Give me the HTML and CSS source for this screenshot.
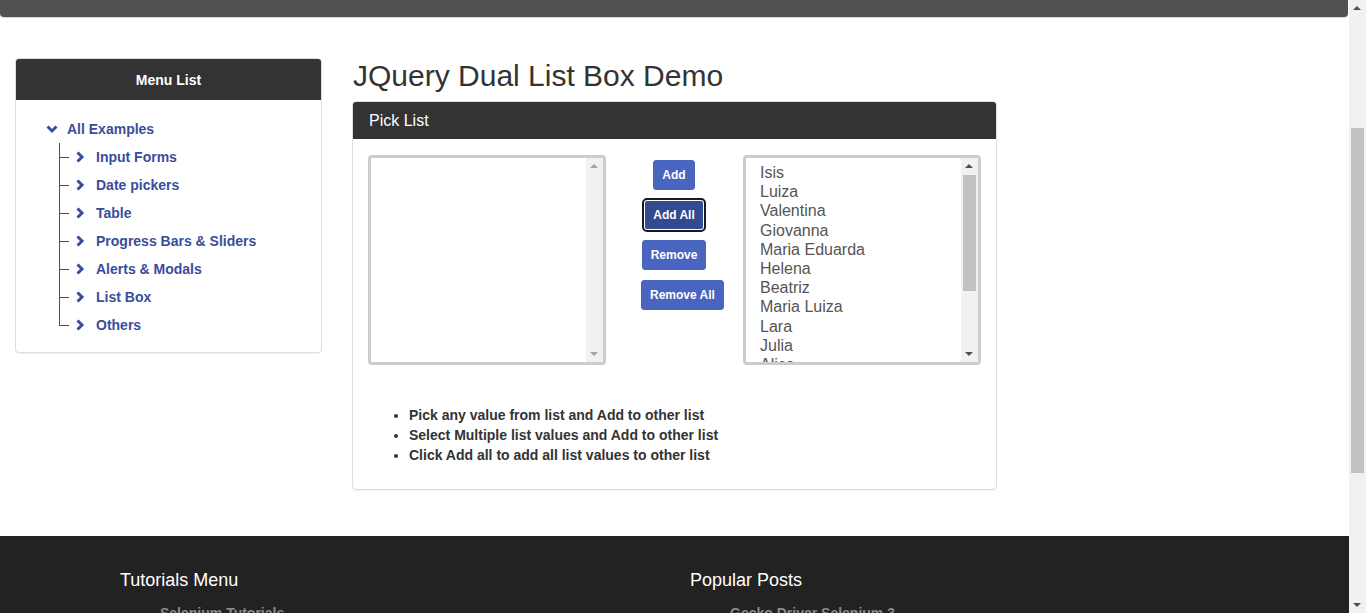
FILE: index.html
```html
<!DOCTYPE html>
<html lang="en">
<head>
<meta charset="utf-8">
<title>JQuery Dual List Box Demo</title>
<link rel="stylesheet" href="styles.css">
</head>
<body>
<div class="site">
  <div class="topbar"></div>
  <div class="content">
    <aside class="side-panel">
      <div class="side-head">Menu List</div>
      <div class="side-body">
        <ul class="tree">
          <li class="tree-root">
            <a class="tree-link root-link"><svg class="chev-down" viewBox="0 0 12 9" width="12" height="9"><path d="M1.5 1.5 L6 6 L10.5 1.5" fill="none" stroke="currentColor" stroke-width="3"/></svg><span>All Examples</span></a>
            <ul class="tree-children">
              <li><a class="tree-link"><svg class="chev-right" viewBox="0 0 9 12" width="9" height="12"><path d="M1.5 1.5 L6 6 L1.5 10.5" fill="none" stroke="currentColor" stroke-width="3"/></svg><span>Input Forms</span></a></li>
              <li><a class="tree-link"><svg class="chev-right" viewBox="0 0 9 12" width="9" height="12"><path d="M1.5 1.5 L6 6 L1.5 10.5" fill="none" stroke="currentColor" stroke-width="3"/></svg><span>Date pickers</span></a></li>
              <li><a class="tree-link"><svg class="chev-right" viewBox="0 0 9 12" width="9" height="12"><path d="M1.5 1.5 L6 6 L1.5 10.5" fill="none" stroke="currentColor" stroke-width="3"/></svg><span>Table</span></a></li>
              <li><a class="tree-link"><svg class="chev-right" viewBox="0 0 9 12" width="9" height="12"><path d="M1.5 1.5 L6 6 L1.5 10.5" fill="none" stroke="currentColor" stroke-width="3"/></svg><span>Progress Bars &amp; Sliders</span></a></li>
              <li><a class="tree-link"><svg class="chev-right" viewBox="0 0 9 12" width="9" height="12"><path d="M1.5 1.5 L6 6 L1.5 10.5" fill="none" stroke="currentColor" stroke-width="3"/></svg><span>Alerts &amp; Modals</span></a></li>
              <li><a class="tree-link"><svg class="chev-right" viewBox="0 0 9 12" width="9" height="12"><path d="M1.5 1.5 L6 6 L1.5 10.5" fill="none" stroke="currentColor" stroke-width="3"/></svg><span>List Box</span></a></li>
              <li><a class="tree-link"><svg class="chev-right" viewBox="0 0 9 12" width="9" height="12"><path d="M1.5 1.5 L6 6 L1.5 10.5" fill="none" stroke="currentColor" stroke-width="3"/></svg><span>Others</span></a></li>
            </ul>
          </li>
        </ul>
      </div>
    </aside>

    <main class="main">
      <h1 class="page-title">JQuery Dual List Box Demo</h1>
      <section class="panel">
        <div class="panel-head">Pick List</div>
        <div class="panel-body">
          <div class="dual">
            <div class="listbox">
              <div class="items"></div>
              <div class="vscroll">
                <span class="arrow-up light"></span>
                <span class="track"></span>
                <span class="arrow-down light"></span>
              </div>
            </div>
            <div class="actions">
              <button class="btn">Add</button>
              <button class="btn focused">Add All</button>
              <button class="btn">Remove</button>
              <button class="btn">Remove All</button>
            </div>
            <div class="listbox">
              <div class="items">
                <div class="item">Isis</div>
                <div class="item">Luiza</div>
                <div class="item">Valentina</div>
                <div class="item">Giovanna</div>
                <div class="item">Maria Eduarda</div>
                <div class="item">Helena</div>
                <div class="item">Beatriz</div>
                <div class="item">Maria Luiza</div>
                <div class="item">Lara</div>
                <div class="item">Julia</div>
                <div class="item">Alice</div>
                <div class="item">Manuela</div>
              </div>
              <div class="vscroll">
                <span class="arrow-up"></span>
                <span class="track"><span class="thumb"></span></span>
                <span class="arrow-down"></span>
              </div>
            </div>
          </div>
          <ul class="notes">
            <li>Pick any value from list and Add to other list</li>
            <li>Select Multiple list values and Add to other list</li>
            <li>Click Add all to add all list values to other list</li>
          </ul>
        </div>
      </section>
    </main>
  </div>

  <footer class="footer">
    <div class="footer-col">
      <h3 class="footer-title">Tutorials Menu</h3>
      <ul class="footer-list"><li>Selenium Tutorials</li></ul>
    </div>
    <div class="footer-col">
      <h3 class="footer-title">Popular Posts</h3>
      <ul class="footer-list"><li>Gecko Driver Selenium 3</li></ul>
    </div>
  </footer>
</div>

<div class="page-scrollbar">
  <span class="pg-arrow-up"></span>
  <span class="pg-track"><span class="pg-thumb"></span></span>
  <span class="pg-arrow-down"></span>
</div>
</body>
</html>
```

FILE: styles.css
```css
* { box-sizing: border-box; }

html, body {
  margin: 0;
  padding: 0;
  height: 613px;
  overflow: hidden;
  background: #fff;
}

body {
  font-family: "Liberation Sans", Arial, sans-serif;
  font-size: 14px;
  color: #333;
}

.site {
  width: 1349px;
}

.topbar {
  height: 17px;
  width: 1348px;
  background: #515151;
  border-radius: 0 0 4px 4px;
  box-shadow: 0 1px 1px rgba(0, 0, 0, 0.18);
}

.content {
  display: flex;
  align-items: flex-start;
  padding-top: 41px;
  padding-left: 15px;
}

/* Sidebar */
.side-panel {
  width: 307px;
  border: 1px solid #ddd;
  border-radius: 4px;
  background: #fff;
  box-shadow: 0 1px 1px rgba(0, 0, 0, 0.05);
  overflow: hidden;
}

.side-head {
  height: 41px;
  background: #333;
  color: #fff;
  font-weight: bold;
  font-size: 14px;
  display: flex;
  align-items: center;
  justify-content: center;
}

.side-body {
  padding: 15px 0 13px 30px;
}

.tree, .tree-children {
  list-style: none;
  margin: 0;
  padding: 0;
}

.tree-link {
  display: flex;
  align-items: center;
  height: 28px;
  color: #3a4d9c;
  font-weight: bold;
  font-size: 14px;
  text-decoration: none;
}

.root-link .chev-down {
  margin-right: 9px;
}

.tree-children {
  margin-left: 13px;
}

.tree-children li {
  position: relative;
  padding-left: 17px;
}

.tree-children li::before {
  content: "";
  position: absolute;
  left: 0;
  top: 0;
  width: 9px;
  height: 14px;
  border-left: 1px solid #3a4d9c;
  border-bottom: 1px solid #3a4d9c;
}

.tree-children li::after {
  content: "";
  position: absolute;
  left: 0;
  top: 14px;
  bottom: 0;
  border-left: 1px solid #3a4d9c;
}

.tree-children li:last-child::after {
  display: none;
}

.chev-right {
  margin-right: 11px;
  margin-left: 0;
}

/* Main */
.main {
  margin-left: 30px;
  width: 645px;
}

.page-title {
  margin: 0 0 9px;
  padding-top: 1px;
  padding-left: 1px;
  font-size: 30px;
  line-height: 33px;
  font-weight: normal;
  color: #333;
}

.panel {
  border: 1px solid #ddd;
  border-radius: 4px;
  box-shadow: 0 1px 1px rgba(0, 0, 0, 0.05);
  overflow: hidden;
}

.panel-head {
  height: 37px;
  background: #333;
  color: #fff;
  font-size: 16px;
  padding-left: 16px;
  display: flex;
  align-items: center;
}

.panel-body {
  padding: 16px 15px 24px;
}

.dual {
  display: flex;
  align-items: flex-start;
}

.listbox {
  width: 238px;
  height: 210px;
  border: 3px solid #ccc;
  border-radius: 4px;
  display: flex;
  background: #fff;
  overflow: hidden;
  flex-shrink: 0;
}

.items {
  flex: 1;
  overflow: hidden;
  padding: 5px 0 0 14px;
}

.item {
  font-size: 16px;
  line-height: 19.2px;
  color: #555;
  white-space: nowrap;
}

.vscroll {
  width: 17px;
  background: #f1f1f1;
  display: flex;
  flex-direction: column;
  align-items: center;
}

.arrow-up, .arrow-down {
  display: block;
  width: 17px;
  height: 17px;
  position: relative;
}

.arrow-up::before, .arrow-down::before {
  content: "";
  position: absolute;
  left: 4px;
  border-left: 4px solid transparent;
  border-right: 4px solid transparent;
}

.arrow-up::before {
  top: 6px;
  border-bottom: 4px solid #505050;
}

.arrow-down::before {
  top: 7px;
  border-top: 4px solid #505050;
}

.arrow-up.light::before { border-bottom-color: #a3a3a3; }
.arrow-down.light::before { border-top-color: #a3a3a3; }

.track {
  flex: 1;
  width: 17px;
  display: flex;
  justify-content: center;
}

.thumb {
  display: block;
  width: 13px;
  height: 116px;
  background: #c1c1c1;
}

.actions {
  width: 66px;
  margin: 0 36px 0 35px;
  padding-top: 5px;
  flex-shrink: 0;
}

.btn {
  display: block;
  margin: 0 auto 10px;
  font-family: "Liberation Sans", Arial, sans-serif;
  font-size: 12px;
  font-weight: bold;
  line-height: 18px;
  padding: 5px 8px;
  color: #fff;
  background: #4a65bf;
  border: 1px solid #4a65bf;
  border-radius: 3px;
  cursor: pointer;
  height: 30px;
  white-space: nowrap;
}

.btn.focused {
  background: #324a8e;
  border-color: #fff;
  outline: 2px solid #151a26;
}

.notes {
  margin: 40px 0 0;
  padding-left: 41px;
  font-weight: bold;
  font-size: 14px;
  line-height: 20px;
  color: #333;
}

/* Footer */
.footer {
  margin-top: 46px;
  background: #222;
  height: 100px;
  padding: 34px 0 0 120px;
  display: grid;
  grid-template-columns: 570px 570px;
}

.footer-title {
  margin: 0;
  font-size: 18px;
  line-height: 20px;
  font-weight: normal;
  color: #fff;
}

.footer-list {
  list-style: none;
  margin: 15px 0 0;
  padding-left: 40px;
  font-size: 14px;
  font-weight: bold;
  color: #8a8a8a;
}

/* Page scrollbar (browser chrome) */
.page-scrollbar {
  position: fixed;
  top: 0;
  right: 0;
  width: 17px;
  height: 613px;
  background: #f1f1f1;
  display: flex;
  flex-direction: column;
}

.pg-arrow-up, .pg-arrow-down {
  display: block;
  height: 17px;
  position: relative;
}

.pg-arrow-up::before, .pg-arrow-down::before {
  content: "";
  position: absolute;
  left: 4px;
  border-left: 4px solid transparent;
  border-right: 4px solid transparent;
}

.pg-arrow-up::before {
  top: 6px;
  border-bottom: 4px solid #505050;
}

.pg-arrow-down::before {
  top: 7px;
  border-top: 4px solid #505050;
}

.pg-track {
  flex: 1;
  display: flex;
  justify-content: center;
  padding-top: 111px;
}

.pg-thumb {
  display: block;
  width: 13px;
  height: 345px;
  background: #c1c1c1;
}
```
